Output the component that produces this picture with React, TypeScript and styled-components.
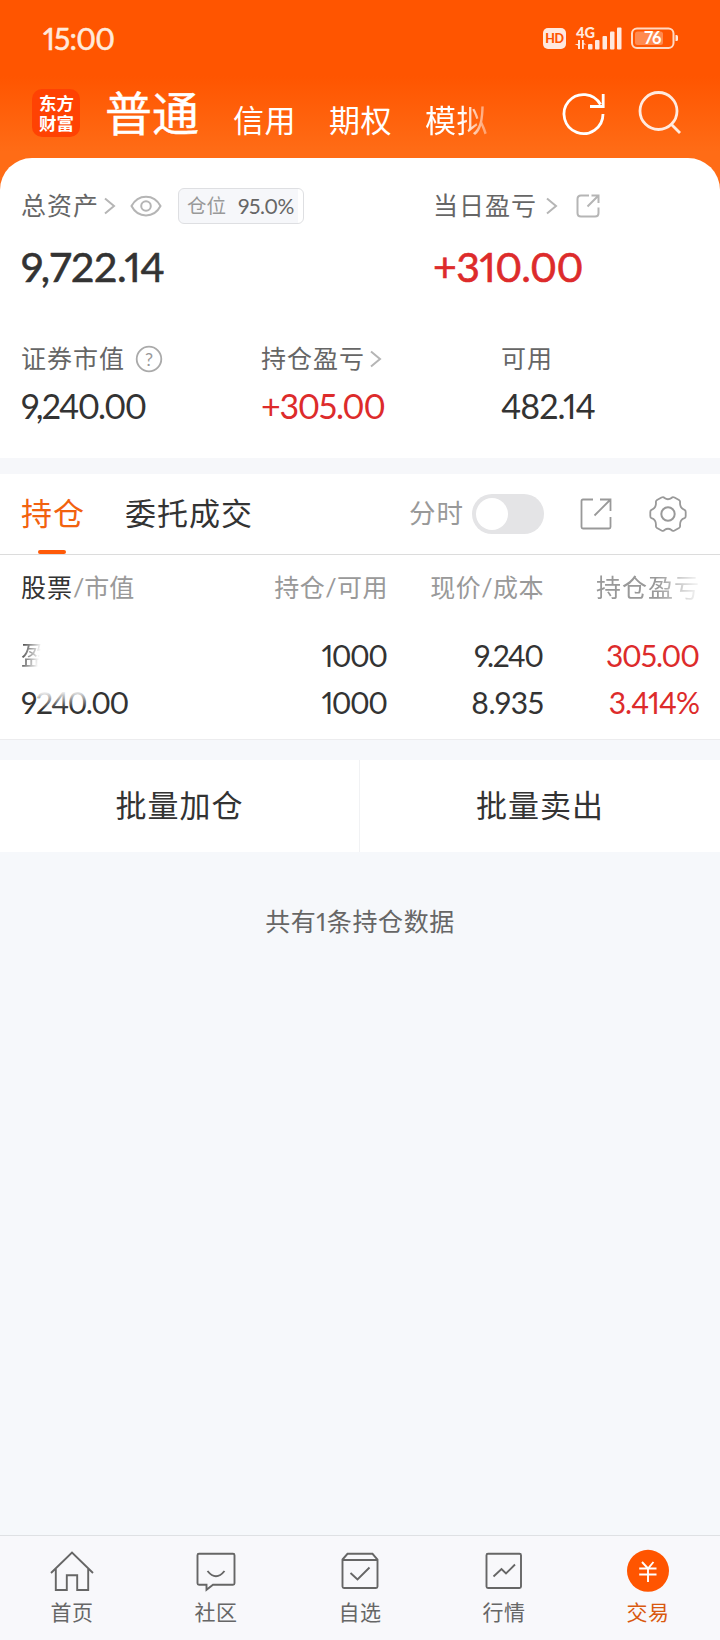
import React from 'react';
import styled, { createGlobalStyle } from 'styled-components';

const GlobalStyle = createGlobalStyle`
  * { box-sizing: border-box; }
  body {
    margin: 0;
    background: #f6f8fb;
    font-family: Lato, 'Noto Sans CJK SC', sans-serif;
    font-feature-settings: 'pnum' 1, 'kern' 1;
    color: #333;
  }
  svg { display: block; flex: none; overflow: visible; }
`;

const Screen = styled.div`
  width: 720px;
  height: 1640px;
  display: flex;
  flex-direction: column;
  overflow: hidden;
`;

/* One text style for labels; size, colour and tracking vary. */
const Txt = styled.span<{ $size: number; $color?: string; $ls?: number; $ml?: number }>`
  font-size: ${p => p.$size}px;
  line-height: ${p => Math.round(p.$size * 1.2)}px;
  color: ${p => p.$color ?? '#333'};
  letter-spacing: ${p => p.$ls ?? 0}px;
  margin-left: ${p => p.$ml ?? 0}px;
  margin-bottom: 2px;
  white-space: nowrap;
`;

/* Figures are tracked tightly; the large ones are slightly heavier. */
const Num = styled(Txt)<{ $stroke?: number }>`
  margin-right: ${p => -(p.$ls ?? 0)}px;
  margin-bottom: ${p => (p.$stroke ? 2 : 4)}px;
  -webkit-text-stroke: ${p => p.$stroke ?? 0}px currentColor;
`;

const Top = styled.div`
  background: linear-gradient(#ff5500 0, #ff5500 76px, #ff6c16 152px);
`;

const StatusBar = styled.div`
  height: 78px;
  padding: 0 41px 0 43px;
  display: flex;
  align-items: center;
  justify-content: space-between;
`;

const StatusIcons = styled.div`
  display: flex;
  align-items: center;
`;

const AppBar = styled.div`
  height: 80px;
  padding: 0 0 0 32px;
  display: flex;
  align-items: flex-start;
`;

const Logo = styled.div`
  width: 48px;
  height: 48px;
  margin-top: 11px;
  padding: 4px 6px 0 7px;
  border-radius: 10px;
  background: #ff4203;
  color: #fff;
  font: 700 17.5px/20px 'Noto Sans CJK SC', sans-serif;
  word-break: break-all;
`;

const AccountTabs = styled.div`
  width: 449px;
  height: 80px;
  display: flex;
  align-items: flex-start;
`;

const AccountTab = styled.div<{ $left: number; $top: number; $fade?: boolean }>`
  margin-left: ${p => p.$left}px;
  padding-top: ${p => p.$top}px;
  display: flex;
  ${p => p.$fade && 'mask-image: linear-gradient(90deg, #000 58%, rgba(0,0,0,.35) 100%);'}
`;

const BarIcon = styled.div<{ $left: number }>`
  margin-left: ${p => p.$left}px;
  padding-top: 11px;
`;

const Summary = styled.section`
  height: 300px;
  padding: 29px 20px 0 21px;
  background: #fff;
  border-radius: 32px 32px 0 0;
`;

const Line = styled.div<{ $h: number; $top?: number }>`
  display: flex;
  height: ${p => p.$h}px;
  margin-top: ${p => p.$top ?? 0}px;
`;

const Cell = styled.div<{ $w?: number; $right?: boolean }>`
  width: ${p => (p.$w ? `${p.$w}px` : 'auto')};
  flex: ${p => (p.$w ? 'none' : '1')};
  display: flex;
  align-items: center;
  justify-content: ${p => (p.$right ? 'flex-end' : 'flex-start')};
`;

const IconBox = styled.div<{ $ml: number }>`
  margin-left: ${p => p.$ml}px;
`;

const Badge = styled.div`
  width: 126px;
  height: 36px;
  margin-left: 16px;
  padding-left: 8px;
  border: 1px solid #dedfe2;
  border-radius: 6px;
  background: linear-gradient(90deg, #f6f7fa 119px, #fff 119px);
  display: flex;
  align-items: center;
`;

const Gap = styled.div<{ $h: number }>`
  height: ${p => p.$h}px;
  background: #f6f7fa;
`;

const TabBar = styled.div`
  height: 81px;
  padding: 0 33px 0 21px;
  background: #fff;
  border-bottom: 1px solid #dcdcdc;
  display: flex;
  align-items: stretch;
`;

const Tab = styled.div<{ $left?: number; $active?: boolean }>`
  margin-left: ${p => p.$left ?? 0}px;
  display: flex;
  flex-direction: column;
  align-items: center;
  padding-top: 21px;
  &::after {
    content: '';
    width: 28px;
    height: 4px;
    border-radius: 2px;
    margin: auto 2px 0 0;
    background: ${p => (p.$active ? '#ff5a08' : 'transparent')};
  }
`;

const Tools = styled.div`
  margin-left: auto;
  height: 80px;
  display: flex;
  align-items: center;
`;

const Toggle = styled.div`
  width: 72px;
  height: 40px;
  margin-left: 8px;
  padding: 4px;
  border-radius: 20px;
  background: #e4e4e6;
  &::before {
    content: '';
    display: block;
    width: 32px;
    height: 32px;
    border-radius: 50%;
    background: #fff;
  }
`;

const Holdings = styled.section`
  height: 185px;
  padding: 0 20px 0 21px;
  background: #fff;
  border-bottom: 1px solid #ececee;
`;

const FadeRight = styled.div`
  display: flex;
  mask-image: linear-gradient(90deg, #000 58%, rgba(0, 0, 0, 0.15) 96%);
`;

const FadeName = styled.div`
  display: flex;
  mask-image: linear-gradient(100deg, #000 0%, transparent 68%);
`;

const FadeTop = styled.div`
  position: relative;
  display: flex;
  &::after {
    content: '';
    position: absolute;
    left: 17px;
    top: 2px;
    width: 52px;
    height: 28px;
    background: linear-gradient(178deg, #fff 18%, rgba(255, 255, 255, 0) 78%);
  }
`;

const Actions = styled.div`
  display: flex;
  height: 92px;
  margin-top: 20px;
  background: #fff;
`;

const Action = styled.div`
  width: 360px;
  display: flex;
  align-items: center;
  justify-content: center;
  &:first-child { border-right: 1px solid #f1f2f4; }
`;

const Footnote = styled.div`
  height: 140px;
  display: flex;
  align-items: center;
  justify-content: center;
`;

const Nav = styled.nav`
  height: 105px;
  margin-top: auto;
  background: #f8f8fb;
  border-top: 1px solid #dfe1e4;
  display: flex;
`;

const NavItem = styled.div`
  flex: 1;
  display: flex;
  flex-direction: column;
  align-items: center;
  padding-top: 13px;
  gap: 6px;
`;

const GREY = '#666';
const LIGHT = '#999';
const RED = '#dd2b2b';

const Chevron = () => (
  <svg width="12" height="18" viewBox="0 0 12 18" fill="none" stroke="#b5b5b5" strokeWidth="2">
    <path d="M1 1.500 10 9 1 16.500" />
  </svg>
);

const navIcons: Record<string, React.ReactNode> = {
  首页: (
    <path d="M1 24 22 3.500 43 24M5.800 20V41H16.800V26.200H27.200V41H38.200V20" />
  ),
  社区: (
    <>
      <path d="M5 4.800H39Q40.500 4.800 40.500 6.300V34.200Q40.500 35.700 39 35.700H19L12.500 40.800V35.700H5Q3.500 35.700 3.500 34.200V6.300Q3.500 4.800 5 4.800Z" />
      <path d="M13.500 22Q22 32.500 30.500 22" />
    </>
  ),
  自选: (
    <>
      <path d="M4.500 10.500 9.500 4.800H34.500L39.500 10.500V37.500Q39.500 39 38 39H6Q4.500 39 4.500 37.500ZM4.500 11H39.500" />
      <path d="M12.500 24 19.500 30.500 31.500 18.500" />
    </>
  ),
  行情: (
    <>
      <rect x="4.500" y="4.800" width="34.500" height="34.200" rx="1.500" />
      <path d="M11.500 27.500 19.500 20 24 24.500 33 15.500" />
    </>
  ),
  交易: (
    <>
      <circle cx="22" cy="21.800" r="21" fill="#ff5500" stroke="none" />
      <path stroke="#fff" d="M16 13 22 19.500 27.500 13M22 19.500V33M13.200 19.500H30.500M13.200 25.500H30.500" />
    </>
  ),
};

export default function App() {
  return (
    <>
      <GlobalStyle />
      <Screen>
        <Top>
          <StatusBar>
            <Num $size={30} $color="#ffe9dc" $stroke={0.5} $ls={-0.8}>15:00</Num>
            <StatusIcons>
              <svg width="136" height="28" viewBox="0 0 136 28">
                <rect x="0" y="3" width="23" height="21" rx="5" fill="#ffe9df" />
                <text x="11.500" y="18" textAnchor="middle" fontFamily="Lato" fontWeight="900" fontSize="12.500" letterSpacing="-0.300" fill="#ff5500">HD</text>
                <text x="33" y="13" fontFamily="Lato" fontWeight="900" fontSize="14.500" letterSpacing="-0.300" fill="#ffe9df">4G</text>
                <g fill="#ffe9df">
                  <path d="M35 15h2v9h-2v-3.500l-3.500-1.500h3.500zM39 15h1.800v3l2.500 1.500h-2.500V24H39z" />
                  <rect x="45" y="19" width="4.500" height="5.500" rx="1" />
                  <rect x="52" y="15" width="4.500" height="9.500" rx="1" />
                  <rect x="59.500" y="11" width="4.500" height="13.500" rx="1" />
                  <rect x="67" y="6.500" width="4.500" height="18" rx="1" />
                  <rect x="74" y="2.500" width="4.500" height="22" rx="1" />
                </g>
                <rect x="89" y="3.500" width="41.500" height="19.500" rx="5" fill="none" stroke="#ffd9c4" strokeWidth="2" />
                <rect x="92" y="6.500" width="28" height="13.500" rx="2.500" fill="#ff8a50" />
                <path d="M132.500 10h1q1.500 0 1.500 1.500v3q0 1.500-1.500 1.500h-1z" fill="#ffe9df" />
                <text x="109.500" y="19" textAnchor="middle" fontFamily="Lato" fontWeight="700" fontSize="16.500" letterSpacing="-0.500" fill="#fff">76</text>
              </svg>
            </StatusIcons>
          </StatusBar>
          <AppBar>
            <Logo>东方财富</Logo>
            <AccountTabs>
              <AccountTab $left={25} $top={7}><Num $size={47} $color="#fff" $stroke={0.4}>普通</Num></AccountTab>
              <AccountTab $left={34} $top={24}><Txt $size={31} $color="#fff" $ls={0.5}>信用</Txt></AccountTab>
              <AccountTab $left={33} $top={24}><Txt $size={31} $color="#fff" $ls={0.5}>期权</Txt></AccountTab>
              <AccountTab $left={33} $top={24} $fade><Txt $size={31} $color="#fff" $ls={0.5}>模拟</Txt></AccountTab>
            </AccountTabs>
            <BarIcon $left={33}>
              <svg width="46" height="46" viewBox="0 0 46 46" fill="none" stroke="#fff" strokeWidth="2.800">
                <path d="M41 25A19.500 19.500 0 1 1 38.500 15.500M41.200 5V17.500H28" />
              </svg>
            </BarIcon>
            <BarIcon $left={29}>
              <svg width="46" height="46" viewBox="0 0 46 46" fill="none" stroke="#ffeadf" strokeWidth="2.800">
                <circle cx="21.500" cy="22" r="18.500" />
                <path d="M34 35 43 44" />
              </svg>
            </BarIcon>
          </AppBar>
          <Summary>
            <Line $h={38}>
              <Cell $w={412}>
                <Txt $size={25} $color={GREY} $ls={1}>总资产</Txt>
                <IconBox $ml={5}><Chevron /></IconBox>
                <IconBox $ml={14}>
                  <svg width="32" height="22" viewBox="0 0 32 22" fill="none" stroke="#b5b5b5" strokeWidth="2">
                    <path d="M1.500 11C8-1.500 24-1.500 30.500 11C24 23.500 8 23.500 1.500 11Z" />
                    <circle cx="16" cy="11" r="4.800" />
                  </svg>
                </IconBox>
                <Badge>
                  <Txt $size={19.500} $color={LIGHT}>仓位</Txt>
                  <Txt $size={21} $color={GREY} $ml={12} $ls={-0.5}>95.0%</Txt>
                </Badge>
              </Cell>
              <Cell>
                <Txt $size={25} $color={GREY} $ls={1}>当日盈亏</Txt>
                <IconBox $ml={9}><Chevron /></IconBox>
                <IconBox $ml={18}>
                  <svg width="24" height="24" viewBox="0 0 24 24" fill="none" stroke="#b5b5b5" strokeWidth="2">
                    <path d="M13 1.500H5Q1.500 1.500 1.500 5V19Q1.500 22.500 5 22.500H19Q22.500 22.500 22.500 19V13.500M15.500 1.500H22.500V9M22.500 1.500 11.500 12.500" />
                  </svg>
                </IconBox>
              </Cell>
            </Line>
            <Line $h={50} $top={17}>
              <Cell $w={412}><Num $size={41} $stroke={0.6} $ls={-0.3}>9,722.14</Num></Cell>
              <Cell><Num $size={41} $stroke={0.6} $color={RED} $ls={-0.5}>+310.00</Num></Cell>
            </Line>
            <Line $h={32} $top={51}>
              <Cell $w={240}>
                <Txt $size={25} $color={GREY} $ls={1}>证券市值</Txt>
                <IconBox $ml={10}>
                  <svg width="28" height="28" viewBox="0 0 28 28">
                    <circle cx="14" cy="14" r="12.300" fill="none" stroke="#aaa" strokeWidth="1.800" />
                    <text x="14" y="20.500" textAnchor="middle" fontFamily="Lato" fontSize="18" fill="#999">?</text>
                  </svg>
                </IconBox>
              </Cell>
              <Cell $w={240}>
                <Txt $size={25} $color={GREY} $ls={1}>持仓盈亏</Txt>
                <IconBox $ml={5}><Chevron /></IconBox>
              </Cell>
              <Cell><Txt $size={25} $color={GREY} $ls={1}>可用</Txt></Cell>
            </Line>
            <Line $h={40} $top={12}>
              <Cell $w={240}><Num $size={34} $ls={-1.7}>9,240.00</Num></Cell>
              <Cell $w={240}><Num $size={34} $color={RED} $ls={-1.3}>+305.00</Num></Cell>
              <Cell><Num $size={34} $ls={-1}>482.14</Num></Cell>
            </Line>
          </Summary>
        </Top>
        <Gap $h={16} />
        <TabBar>
          <Tab $active><Txt $size={31} $color="#f2620f" $ls={1}>持仓</Txt></Tab>
          <Tab $left={40}><Txt $size={31} $ls={1}>委托成交</Txt></Tab>
          <Tools>
            <Txt $size={26.500} $color={LIGHT} $ls={1}>分时</Txt>
            <Toggle />
            <IconBox $ml={36}>
              <svg width="32" height="32" viewBox="0 0 32 32" fill="none" stroke="#999" strokeWidth="1.800">
                <path d="M13 1.500H3Q1.500 1.500 1.500 3V29Q1.500 30.500 3 30.500H29Q30.500 30.500 30.500 29V19M20 1.500H30.500V13M30.500 1.500 14.500 17.500" />
              </svg>
            </IconBox>
            <IconBox $ml={37}>
              <svg width="38" height="38" viewBox="0 0 38 38" fill="none" stroke="#999" strokeWidth="1.800">
                <path strokeLinejoin="round" d="M12.500 2.500Q14.500 1.500 15.500 3Q19 5.500 22.500 3Q23.500 1.500 25.500 2.500L30 5Q31.500 6 31 8C31 12 33 14 35.500 14.800Q36.700 15.300 36.700 17V21Q36.700 22.700 35.500 23.200C33 24 31 26 31 30Q31.500 32 30 33L25.500 35.500Q23.500 36.500 22.500 35Q19 32.500 15.500 35Q14.500 36.500 12.500 35.500L8 33Q6.500 32 7 30C7 26 5 24 2.500 23.200Q1.300 22.700 1.300 21V17Q1.300 15.300 2.500 14.800C5 14 7 12 7 8Q6.500 6 8 5Z" />
                <circle cx="19" cy="19" r="6.700" strokeWidth="2" />
              </svg>
            </IconBox>
          </Tools>
        </TabBar>
        <Holdings>
          <Line $h={66}>
            <Cell $w={166}>
              <Txt $size={25} $ls={1}>股票</Txt>
              <Txt $size={25} $color={LIGHT} $ls={0}>/市值</Txt>
            </Cell>
            <Cell $w={201} $right><Txt $size={25} $color={LIGHT} $ls={0.5}>持仓/可用</Txt></Cell>
            <Cell $w={156} $right><Txt $size={25} $color={LIGHT} $ls={0.5}>现价/成本</Txt></Cell>
            <Cell $right><FadeRight><Txt $size={25} $color={LIGHT} $ls={1}>持仓盈亏</Txt></FadeRight></Cell>
          </Line>
          <Line $h={47} $top={12}>
            <Cell $w={166}><FadeName><Txt $size={26}>盈</Txt></FadeName></Cell>
            <Cell $w={201} $right><Num $size={30} $ls={-1.5}>1000</Num></Cell>
            <Cell $w={156} $right><Num $size={30} $ls={-1.5}>9.240</Num></Cell>
            <Cell $right><Num $size={30} $color={RED} $ls={-1.1}>305.00</Num></Cell>
          </Line>
          <Line $h={47}>
            <Cell $w={166}><FadeTop><Num $size={30} $ls={-1.4}>9240.00</Num></FadeTop></Cell>
            <Cell $w={201} $right><Num $size={30} $ls={-1.5}>1000</Num></Cell>
            <Cell $w={156} $right><Num $size={30} $ls={-0.4}>8.935</Num></Cell>
            <Cell $right><Num $size={30} $color={RED} $ls={-0.9}>3.414%</Num></Cell>
          </Line>
        </Holdings>
        <Actions>
          <Action><Txt $size={31} $ls={1}>批量加仓</Txt></Action>
          <Action><Txt $size={31} $ls={1}>批量卖出</Txt></Action>
        </Actions>
        <Footnote><Txt $size={25} $color={GREY} $ls={0.6}>共有1条持仓数据</Txt></Footnote>
        <Nav>
          {Object.entries(navIcons).map(([name, icon]) => (
            <NavItem key={name}>
              <svg width="44" height="44" viewBox="0 0 44 44" fill="none" stroke="#666" strokeWidth="1.900">{icon}</svg>
              <Txt $size={21} $color={name === '交易' ? '#d9590f' : GREY} $ls={0.5}>{name}</Txt>
            </NavItem>
          ))}
        </Nav>
      </Screen>
    </>
  );
}
